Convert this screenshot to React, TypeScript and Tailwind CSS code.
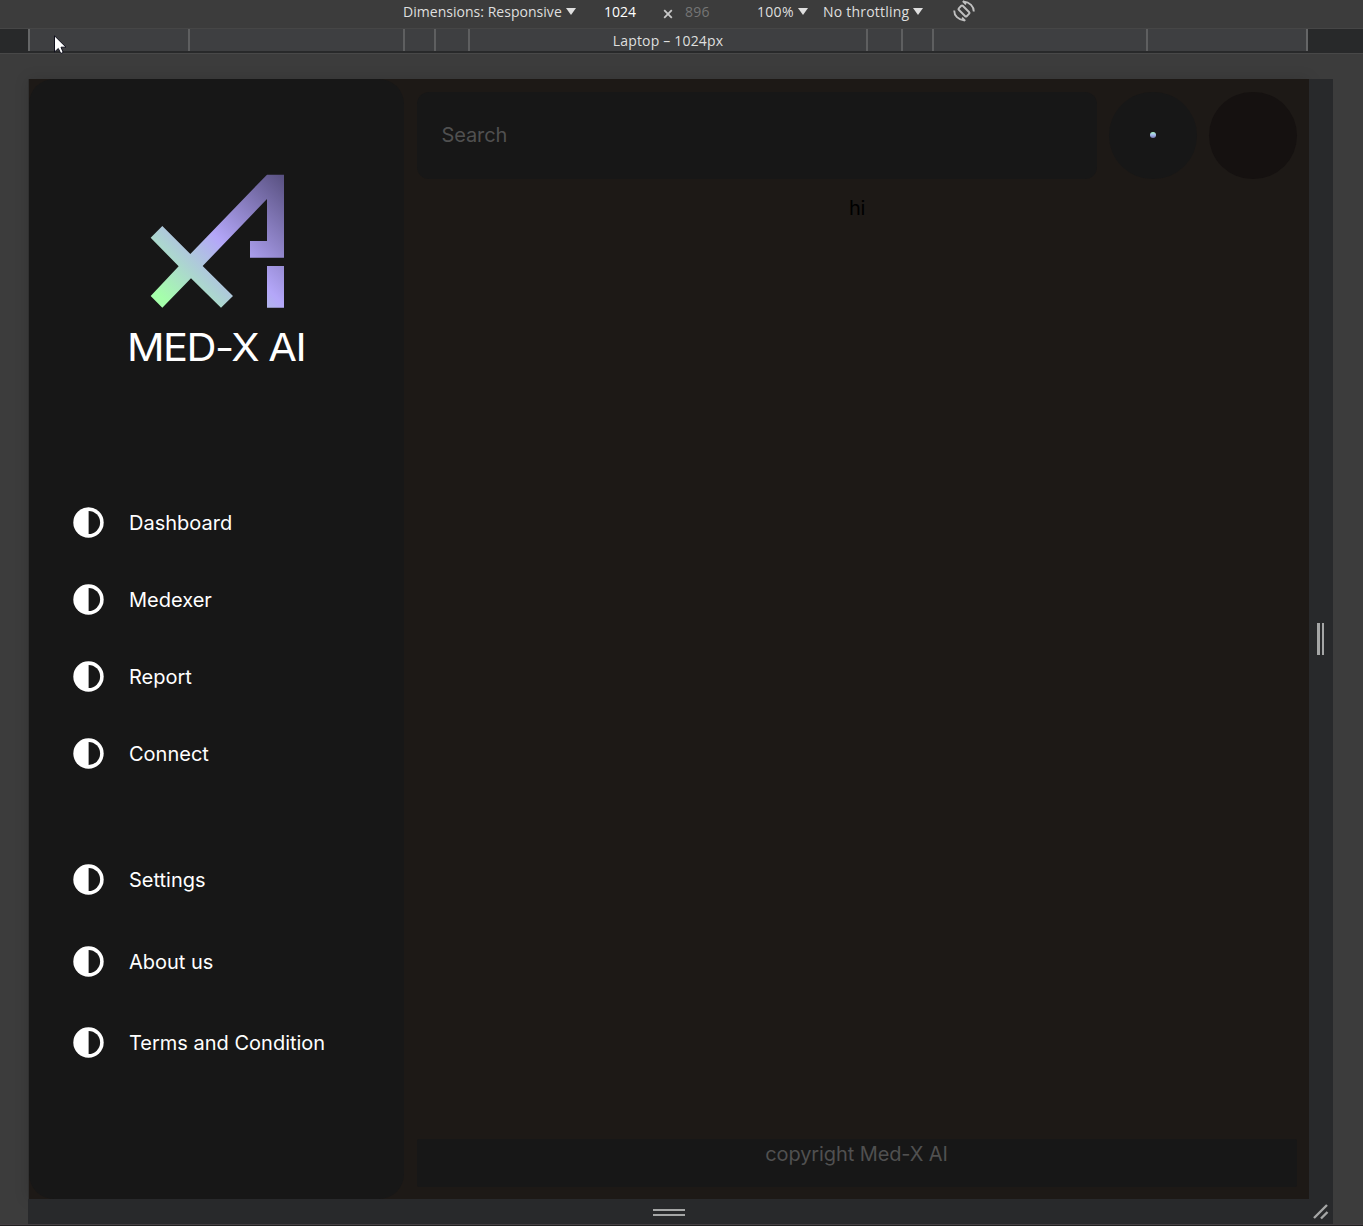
const primaryLinks = ['Dashboard', 'Medexer', 'Report', 'Connect'];
const secondaryLinks = ['Settings', 'About us', 'Terms and Condition'];

function ContrastIcon() {
  return (
    <svg className="block h-8 w-8 shrink-0" viewBox="0 0 32 32">
      <circle cx="15.5" cy="15.5" r="15.2" fill="#fff" />
      <path d="M15.6 4A11.5 11.5 0 0 1 15.6 27Z" fill="#171717" />
    </svg>
  );
}

function Logo() {
  return (
    <svg className="block h-[134px] w-[135px]" viewBox="120 42 405 402">
      <defs>
        <linearGradient id="brand" gradientUnits="userSpaceOnUse" x1="122" y1="443" x2="521" y2="44">
          <stop offset="0.08" stopColor="#a5ffab" />
          <stop offset="0.51" stopColor="#b4a7f9" />
          <stop offset="1" stopColor="#585080" />
        </linearGradient>
      </defs>
      <path
        fill="url(#brand)"
        d="M122 408 206 319 122 233 157 198 241 282 471 44H522V293H420V243H471V117L278 318 369 408 333 443 243 355 157 443ZM471 318H522V443H471Z"
      />
    </svg>
  );
}

function NavItem({ label }: { label: string }) {
  return (
    <a className="flex h-8 items-center gap-6 whitespace-nowrap text-[20px] text-white">
      <ContrastIcon />
      <span>{label}</span>
    </a>
  );
}

function Caret() {
  return (
    <svg className="h-[7px] w-[10px] shrink-0" viewBox="0 0 10 7">
      <path d="M0 0H10L5 7Z" fill="#dfdfdf" />
    </svg>
  );
}

function RotateIcon() {
  return (
    <svg className="h-6 w-6 shrink-0" viewBox="0 0 24 24" fill="none" stroke="#c0c0c0" strokeWidth="1.9">
      <rect x="9.2" y="6.4" width="5.6" height="11.2" rx="1" transform="rotate(-45 12 12)" />
      <path d="M2.2 11.5C2.2 16.6 6 20.9 12.8 21.6M10 18.6 13.2 21.8M21.8 12.5C21.8 7.4 18 3.1 11.2 2.4M14 5.4 10.8 2.2" />
    </svg>
  );
}

function Toolbar() {
  return (
    <div className="flex h-7 items-center pb-[6px] pl-[403px] font-['Open_Sans',sans-serif] text-[14px] text-[#dfdfdf]">
      <div className="flex w-[201px] items-center gap-[3px] whitespace-nowrap">
        <span className="w-[160px] tracking-[0.03px]">Dimensions: Responsive</span>
        <Caret />
      </div>
      <span className="w-[58px] text-white">1024</span>
      <svg className="mt-[5px] h-[10px] w-[12px]" viewBox="0 0 12 10" stroke="#c8c8c8" strokeWidth="1.8">
        <path d="M2.2 1.2 9.8 8.8M9.8 1.2 2.2 8.8" />
      </svg>
      <span className="ml-[11px] w-[72px] tracking-[0.2px] text-[#757575]">896</span>
      <div className="flex w-[66px] items-center gap-[3px]">
        <span className="w-[38px] tracking-[0.3px]">100%</span>
        <Caret />
      </div>
      <div className="flex w-[129px] items-center gap-[3px] whitespace-nowrap">
        <span className="w-[87px] tracking-[0.22px]">No throttling</span>
        <Caret />
      </div>
      <RotateIcon />
    </div>
  );
}

function Ruler() {
  return (
    <div className="flex h-[25px] border-t border-[#464646] bg-[#28292a] pb-[2px] font-['Open_Sans',sans-serif] text-[14px] text-[#dfdfdf]">
      <div className="ml-7 flex h-[22px] w-[1280px] border-x-2 border-[#656667] bg-[#3e3f41]">
        <div className="w-[160px] border-r-2 border-[#5e5f60]" />
        <div className="w-[215px] border-r-2 border-[#5e5f60]" />
        <div className="w-[31px] border-r-2 border-[#5e5f60]" />
        <div className="w-[34px] border-r-2 border-[#5e5f60]" />
        <div className="w-[398px] border-r-2 border-[#5e5f60] text-center leading-[23px] tracking-[0.18px]">Laptop – 1024px</div>
        <div className="w-[35px] border-r-2 border-[#5e5f60]" />
        <div className="w-[31px] border-r-2 border-[#5e5f60]" />
        <div className="w-[214px] border-r-2 border-[#5e5f60]" />
      </div>
    </div>
  );
}

function Sidebar() {
  return (
    <aside className="w-[375px] shrink-0 rounded-[25px] bg-[#171717] pt-[95px]">
      <div className="pl-[121px]">
        <Logo />
      </div>
      <h1 className="mt-[15px] h-[48px] whitespace-nowrap pl-[98px] text-[38.5px] font-normal leading-[49px] tracking-[-1.4px] text-white">
        <span className="inline-block origin-left scale-x-[1.08]">MED-X AI</span>
      </h1>
      <nav className="mt-[136px] pl-11">
        <div className="flex flex-col gap-[45px]">
          {primaryLinks.map((label) => (
            <NavItem key={label} label={label} />
          ))}
        </div>
        <div className="mt-[94px] flex flex-col gap-[49.5px]">
          {secondaryLinks.map((label) => (
            <NavItem key={label} label={label} />
          ))}
        </div>
      </nav>
    </aside>
  );
}

function MainPanel() {
  return (
    <main className="flex flex-1 flex-col px-3 py-3 pl-[13px]">
      <div className="mt-[1px] flex h-[87px] gap-3">
        <div className="flex w-[680px] items-center rounded-xl bg-[#171717] pb-[2px] pl-[24.5px] text-[20px] tracking-[-0.1px] text-[#505050]">Search</div>
        <div className="flex w-[88px] items-center justify-center rounded-full bg-[#171717] pb-[2px]">
          <div className="h-[6px] w-[6px] rounded-full bg-linear-to-b from-[#a8f5bd] via-[#a7baf0] to-[#7476aa]" />
        </div>
        <div className="w-[88px] rounded-full bg-[#151110]" />
      </div>
      <div className="mt-[14px] flex-1 text-center text-[20px] leading-[30px] tracking-[-0.4px] text-black">hi</div>
      <footer className="h-12 rounded-[2px] bg-[#171717] pr-[1px] text-center text-[20px] leading-[30px] tracking-[-0.1px] text-[#505050]">
        copyright Med-X AI
      </footer>
    </main>
  );
}

function Cursor() {
  return (
    <svg className="absolute left-[54px] top-[35px] h-[20px] w-[13px]" viewBox="0 0 13 20">
      <path d="M.5 .8V17L4.3 13.5 6.8 18.5 9.2 17.4 7 12.2H12Z" fill="#fff" stroke="#10101c" />
    </svg>
  );
}

export default function App() {
  return (
    <div className="relative flex h-[1226px] w-[1363px] flex-col overflow-hidden bg-[#3c3c3c] font-['Inter',sans-serif]">
      <Toolbar />
      <Ruler />
      <div className="h-[25px] shrink-0 border-t border-[#484848]" />
      <div className="ml-[28px] mt-[1px] flex h-[1120px] w-[1305px] shrink-0">
        <div className="flex w-[1281px] border-l border-[#303030] bg-[#1d1916] shadow-[0_0_14px_rgba(0,0,0,0.12)]">
          <Sidebar />
          <MainPanel />
        </div>
        <div className="flex w-6 items-center justify-center bg-[#28292b]">
          <div className="mr-[2px] flex h-8 w-[7px] justify-between">
            <div className="w-[3px] bg-[#a5a6a6]" />
            <div className="w-[2px] bg-[#a5a6a6]" />
          </div>
        </div>
      </div>
      <div className="ml-[28px] flex h-[25px] w-[1305px] shrink-0 bg-[#28292b]">
        <div className="flex w-[1281px] items-center justify-center">
          <div className="mt-[2px] flex h-[7px] w-8 flex-col justify-between">
            <div className="h-[2px] bg-[#a5a6a6]" />
            <div className="h-[2px] bg-[#a5a6a6]" />
          </div>
        </div>
        <svg className="h-6 w-6" viewBox="0 0 24 24" stroke="#a5a6a6" strokeWidth="2.4">
          <path d="M5 19 18 6M12 19.5 18.5 13" />
        </svg>
      </div>
      <div className="h-[2px] shrink-0 border-t border-[#464044] bg-[#202020]" />
      <Cursor />
    </div>
  );
}
